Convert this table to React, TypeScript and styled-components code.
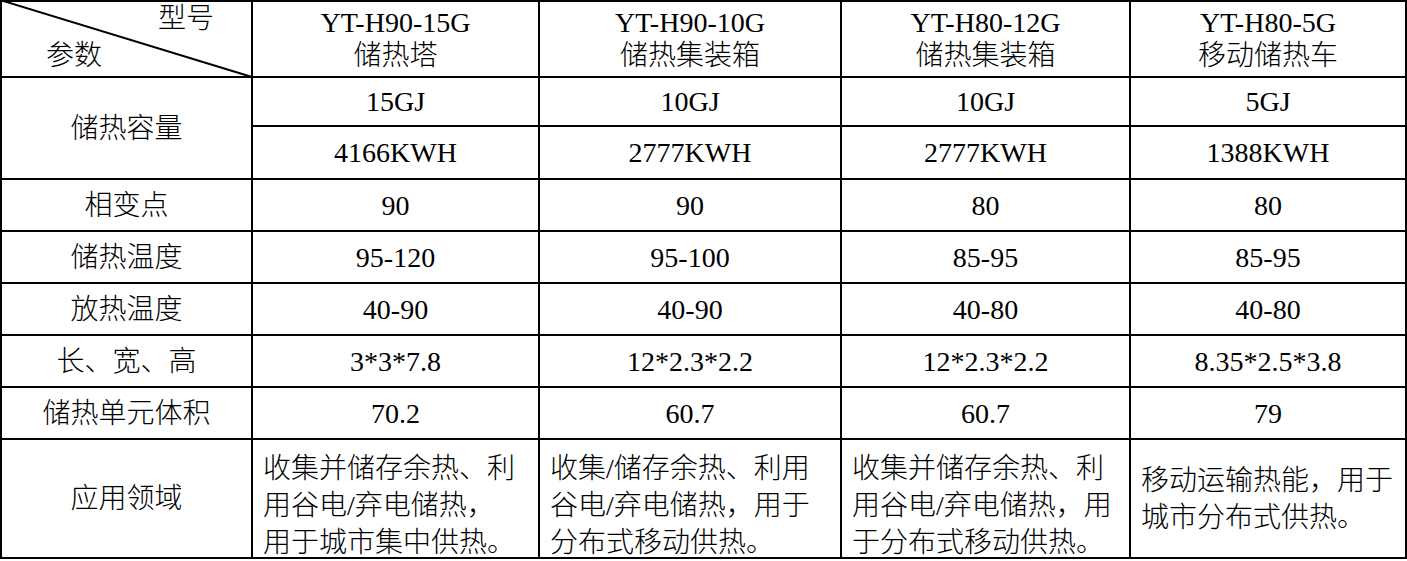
import React from "react";
import styled, { createGlobalStyle } from "styled-components";

const GlobalStyle = createGlobalStyle`
  html, body {
    margin: 0;
    padding: 0;
    background: #fff;
  }
  body {
    font-family: "Liberation Serif", "Noto Sans CJK SC", serif;
    color: #000;
  }
`;

const Table = styled.div`
  display: grid;
  box-sizing: border-box;
  width: 1407px;
  grid-template-columns: 249px 285px 300px 287px 274px;
  grid-template-rows: 74px 47px 51px repeat(5, 50px) 117px;
  gap: 2px;
  padding: 2px;
  background: #000;
`;

const Cell = styled.div<{ $rows?: number }>`
  grid-row: span ${(p) => p.$rows ?? 1};
  background: #fff;
  display: flex;
  align-items: center;
  justify-content: center;
  text-align: center;
  font-size: 28px;
  line-height: 33px;
  font-weight: 300;
  white-space: nowrap;
`;

const HeadCell = styled(Cell)`
  flex-direction: column;
`;

const CornerCell = styled.div`
  position: relative;
  background: #fff;
  display: flex;
  flex-direction: column;
  justify-content: flex-start;
  font-size: 28px;
  line-height: 33px;
  font-weight: 300;
  white-space: nowrap;
`;

const CornerTop = styled.span`
  align-self: flex-end;
  margin-right: 37px;
`;

const CornerBottom = styled.span`
  align-self: flex-start;
  margin-left: 44px;
  margin-top: 4px;
`;

const Diagonal = styled.svg`
  position: absolute;
  left: -2px;
  top: -2px;
  width: calc(100% + 3px);
  height: calc(100% + 3px);
  overflow: visible;
  pointer-events: none;
`;

const UseCell = styled.div<{ $shift: number }>`
  background: #fff;
  display: flex;
  align-items: center;
  justify-content: flex-start;
  box-sizing: border-box;
  padding: ${(p) => p.$shift}px 0 0 10px;
  font-size: 28px;
  line-height: 37px;
  font-weight: 300;
  white-space: nowrap;
`;

const models = [
  ["YT-H90-15G", "储热塔"],
  ["YT-H90-10G", "储热集装箱"],
  ["YT-H80-12G", "储热集装箱"],
  ["YT-H80-5G", "移动储热车"],
];

const rows: { label: string; values: string[] }[] = [
  { label: "相变点", values: ["90", "90", "80", "80"] },
  { label: "储热温度", values: ["95-120", "95-100", "85-95", "85-95"] },
  { label: "放热温度", values: ["40-90", "40-90", "40-80", "40-80"] },
  { label: "长、宽、高", values: ["3*3*7.8", "12*2.3*2.2", "12*2.3*2.2", "8.35*2.5*3.8"] },
  { label: "储热单元体积", values: ["70.2", "60.7", "60.7", "79"] },
];

const uses = [
  ["收集并储存余热、利", "用谷电/弃电储热，", "用于城市集中供热。"],
  ["收集/储存余热、利用", "谷电/弃电储热，用于", "分布式移动供热。"],
  ["收集并储存余热、利", "用谷电/弃电储热，用", "于分布式移动供热。"],
  ["移动运输热能，用于", "城市分布式供热。"],
];

export default function App() {
  return (
    <>
      <GlobalStyle />
      <Table>
        <CornerCell>
          <Diagonal viewBox="0 0 100 100" preserveAspectRatio="none">
            <line x1="0" y1="0" x2="100" y2="100" stroke="#000" strokeWidth="2" vectorEffect="non-scaling-stroke" />
          </Diagonal>
          <CornerTop>型号</CornerTop>
          <CornerBottom>参数</CornerBottom>
        </CornerCell>
        {models.map(([code, name]) => (
          <HeadCell key={code}>
            <span>{code}</span>
            <span>{name}</span>
          </HeadCell>
        ))}

        <Cell $rows={2}>储热容量</Cell>
        {["15GJ", "10GJ", "10GJ", "5GJ"].map((v, i) => (
          <Cell key={"gj" + i}>{v}</Cell>
        ))}
        {["4166KWH", "2777KWH", "2777KWH", "1388KWH"].map((v, i) => (
          <Cell key={"kwh" + i}>{v}</Cell>
        ))}

        {rows.map((r) => (
          <React.Fragment key={r.label}>
            <Cell>{r.label}</Cell>
            {r.values.map((v, i) => (
              <Cell key={i}>{v}</Cell>
            ))}
          </React.Fragment>
        ))}

        <Cell>应用领域</Cell>
        {uses.map((lines, i) => (
          <UseCell key={i} $shift={lines.length === 3 ? 13 : 0}>
            <div>
              {lines.map((l, j) => (
                <div key={j}>{l}</div>
              ))}
            </div>
          </UseCell>
        ))}
      </Table>
    </>
  );
}
